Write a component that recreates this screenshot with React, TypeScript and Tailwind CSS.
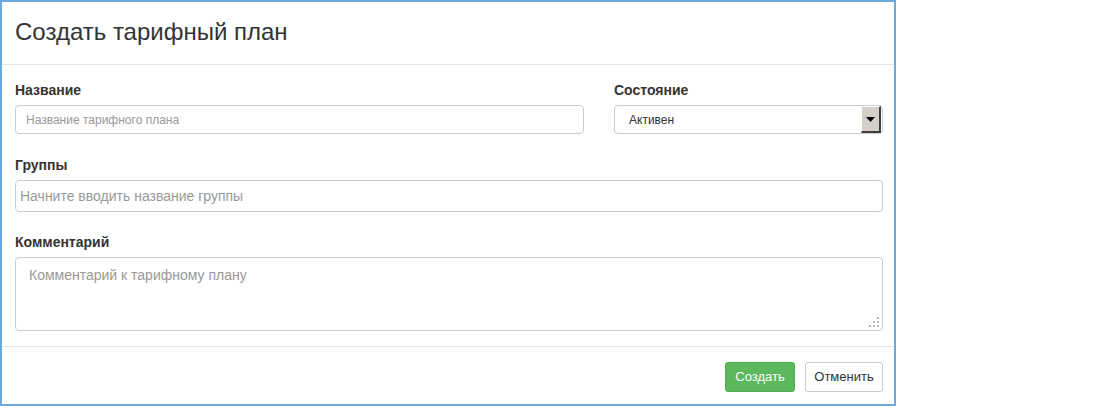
import React from "react";

const font = { fontFamily: '"Liberation Sans", Arial, sans-serif' };

function Label({ children }: { children: React.ReactNode }) {
  return <div className="text-[14px] leading-[20px] font-bold text-[#333] mb-[5px]">{children}</div>;
}

export default function App() {
  return (
    <div className="w-[1100px] h-[406px] bg-white" style={font}>
      <div className="w-[896px] h-[406px] border-2 border-[#6fa8dc] bg-white flex flex-col">
        {/* Header */}
        <div className="h-[63px] px-[13px] flex items-center border-b border-[#e5e5e5]">
          <h4 className="text-[24px] text-[#333] leading-none pb-[2px]">Создать тарифный план</h4>
        </div>

        {/* Body */}
        <div className="pl-[13px] pr-[11px] pt-[15px] h-[282px] border-b border-[#e5e5e5]">
          <div className="flex gap-[30px]">
            <div className="w-[569px]">
              <Label>Название</Label>
              <div className="h-[29px] border border-[#ccc] rounded-[4px] flex items-center px-[10px] text-[12px] text-[#999]">
                Название тарифного плана
              </div>
            </div>
            <div className="w-[269px]">
              <Label>Состояние</Label>
              <div className="h-[29px] border border-[#ccc] rounded-[4px] flex items-center pl-[14px] pr-[1px] text-[12px] text-[#333]">
                <span className="flex-1">Активен</span>
                <div className="w-[20px] h-[27px] bg-[#d4d0c8] border-r-2 border-b-2 border-[#404040] border-t border-l border-t-white border-l-white flex items-center justify-center">
                  <svg width="9" height="5" viewBox="0 0 9 5">
                    <path d="M0 0h9L4.5 5z" fill="#000" />
                  </svg>
                </div>
              </div>
            </div>
          </div>

          <div className="mt-[21px]">
            <Label>Группы</Label>
            <div className="h-[32px] border border-[#ccc] rounded-[4px] flex items-center px-[4px] text-[14px] text-[#999]">
              Начните вводить название группы
            </div>
          </div>

          <div className="mt-[20px]">
            <Label>Комментарий</Label>
            <div className="relative h-[74px] border border-[#ccc] rounded-[4px] px-[13px] pt-[7px] text-[14px] text-[#999]">
              Комментарий к тарифному плану
              <div className="absolute right-[3px] bottom-[3px] grid grid-cols-3 gap-[2px]">
                <span />
                <span />
                <span className="w-[2px] h-[2px] bg-[#bbb]" />
                <span />
                <span className="w-[2px] h-[2px] bg-[#bbb]" />
                <span className="w-[2px] h-[2px] bg-[#bbb]" />
                <span className="w-[2px] h-[2px] bg-[#bbb]" />
                <span className="w-[2px] h-[2px] bg-[#bbb]" />
                <span className="w-[2px] h-[2px] bg-[#bbb]" />
              </div>
            </div>
          </div>
        </div>

        {/* Footer */}
        <div className="flex-1 flex items-start justify-end gap-[10px] pr-[11px] pt-[15px]">
          <button className="w-[70px] h-[30px] rounded-[3px] bg-[#5cb85c] border border-[#4cae4c] text-white text-[13px]">
            Создать
          </button>
          <button className="w-[78px] h-[30px] rounded-[3px] bg-white border border-[#ccc] text-[#333] text-[13px]">
            Отменить
          </button>
        </div>
      </div>
    </div>
  );
}
